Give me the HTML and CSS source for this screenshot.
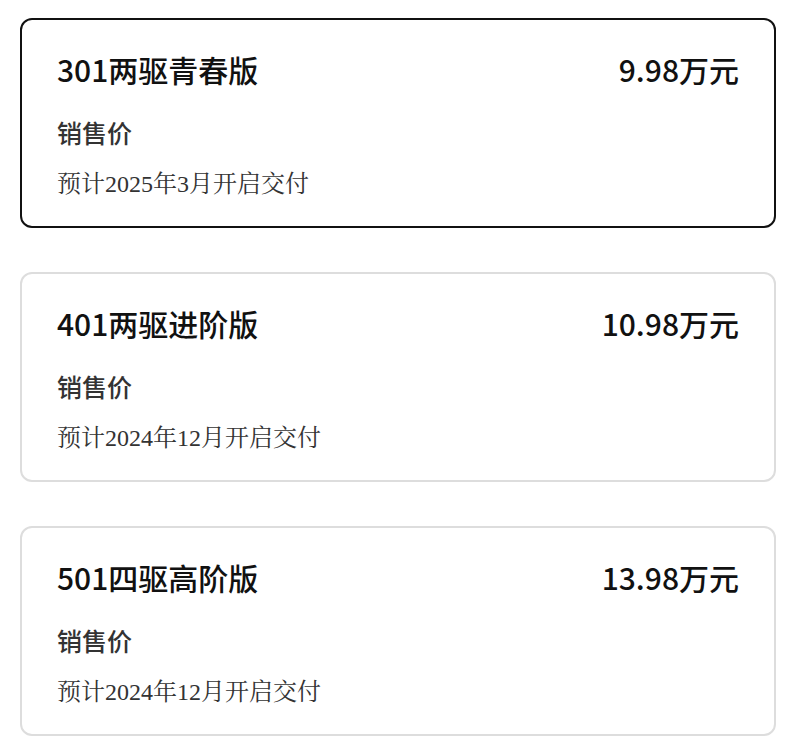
FILE: index.html
```html
<!DOCTYPE html>
<html>
<head>
  <meta charset="UTF-8">
  <title>车型选择</title>
  <link rel="stylesheet" href="styles.css">
</head>
<body>
  <div class="list">
    <div class="card selected">
      <div class="row">
        <span class="name">301两驱青春版</span>
        <span class="price">9.98万元</span>
      </div>
      <div class="label">销售价</div>
      <div class="note">预计2025年3月开启交付</div>
    </div>

    <div class="card">
      <div class="row">
        <span class="name">401两驱进阶版</span>
        <span class="price">10.98万元</span>
      </div>
      <div class="label">销售价</div>
      <div class="note">预计2024年12月开启交付</div>
    </div>

    <div class="card">
      <div class="row">
        <span class="name">501四驱高阶版</span>
        <span class="price">13.98万元</span>
      </div>
      <div class="label">销售价</div>
      <div class="note">预计2024年12月开启交付</div>
    </div>
  </div>
</body>
</html>
```

FILE: styles.css
```css
body { margin: 0; padding: 18px 20px; background: #fff; font-family: "Noto Sans CJK SC", sans-serif; color: #111; }
.list { display: flex; flex-direction: column; gap: 44px; }
.card { border: 2px solid #ddd; border-radius: 12px; padding: 29px 35px 25px 35px; }
.card.selected { border-color: #111; }
.row { display: flex; justify-content: space-between; align-items: center; height: 40px; }
.name, .price { font-size: 30px; font-weight: 500; line-height: 40px; }
.label { margin-top: 26px; font-size: 25px; font-weight: 500; line-height: 34px; color: #333; }
.note { margin-top: 18px; font-family: "Liberation Serif", "Noto Serif CJK SC", serif; font-size: 24px; line-height: 34px; color: #333; }
```
